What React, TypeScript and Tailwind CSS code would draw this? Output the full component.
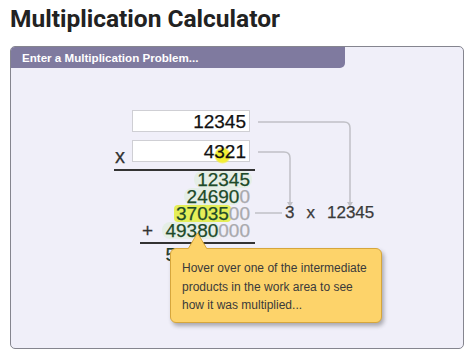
import React from "react";

function Pill({ children, hl }: { children: React.ReactNode; hl?: boolean }) {
  return (
    <span
      className={
        hl
          ? "inline-block h-[17px] rounded-[4px] bg-[#e4ee58] leading-[18px] text-[#1d4a29] shadow-[2px_0_0_0_#e4ee58,-2px_0_0_0_#e4ee58]"
          : "inline-block h-[17px] rounded-[8px] bg-[#e5eee6] leading-[18px] text-[#1d4a29] shadow-[2px_0_0_0_#e5eee6,-3px_0_0_0_#e5eee6]"
      }
    >
      {children}
    </span>
  );
}

export default function App() {
  return (
    <div className="h-[358px] w-[474px] overflow-hidden bg-white font-['Liberation_Sans',Arial,sans-serif]">
      <h1 className="h-[46px] pl-[10px] pt-[4px] font-['Roboto',sans-serif] text-[24.5px] font-bold leading-[30px] tracking-[0px] text-[#222]">
        Multiplication Calculator
      </h1>
      <div className="relative mx-[10px] h-[303px] rounded-[5px] border border-[#85858f] bg-[#f0eff9]">
        <div className="h-[21px] w-[334px] rounded-br-[5px] rounded-tl-[4px] bg-[#7f7a9f] pl-[11px] text-[11.6px] font-bold leading-[21px] text-white">
          Enter a Multiplication Problem...
        </div>

        <div className="ml-[103px] mt-[42px] w-[141px] text-[19px] leading-[17px] [-webkit-text-stroke:0.25px]">
          <div className="flex justify-end pr-[5px]">
            <div className="h-[22px] w-[118px] border border-[#cfcfd4] bg-white pr-[3px] text-right leading-[21px] text-[#111]">
              12345
            </div>
          </div>
          <div className="mt-[8px] flex items-end pr-[5px]">
            <span className="mb-[-4px] ml-[1px] text-[20px] leading-[20px] text-[#333]">x</span>
            <div className="isolate ml-auto h-[22px] w-[118px] border border-[#cfcfd4] bg-white pr-[3px] text-right leading-[21px] text-[#111]">
              4
              <span className="relative">
                <span className="absolute left-[0px] top-[6px] -z-10 h-[17px] w-[17px] rounded-full bg-[radial-gradient(circle,#f3ee35_0%,#f3ee35_55%,rgba(243,238,53,0)_72%)]" />
                3
              </span>
              21
            </div>
          </div>
          <div className="mt-[7px] h-[2px] bg-[#333]" />
          <div className="flex h-[17px] justify-end pr-[5px]">
            <Pill>12345</Pill>
          </div>
          <div className="flex h-[17px] justify-end pr-[5px]">
            <Pill>24690</Pill>
            <span className="leading-[18px] text-[#a9a9ad]">0</span>
          </div>
          <div className="flex h-[17px] justify-end pr-[5px]">
            <Pill hl>37035</Pill>
            <span className="leading-[18px] text-[#a9a9ad]">00</span>
          </div>
          <div className="flex h-[17px] items-center pr-[5px]">
            <span className="ml-[28px] leading-[18px] text-[#333]">+</span>
            <span className="ml-auto flex">
              <Pill>49380</Pill>
              <span className="leading-[18px] text-[#a9a9ad]">000</span>
            </span>
          </div>
          <div className="ml-[26px] mt-[3px] h-[2px] bg-[#333]" />
          <div className="flex h-[17px] justify-end pr-[5px] pt-[2px] text-[#1f3d2c]">53342745</div>
        </div>

        <svg className="pointer-events-none absolute left-0 top-0" width="454" height="303">
          <g fill="none" stroke="#c0c0c6" strokeWidth="1.5">
            <path d="M247 75 H333 Q339 75 339 81 V157" />
            <path d="M247 105 H273 Q279 105 279 111 V157" />
            <path d="M244 166 H271" />
          </g>
          <path d="M336 155 L339 160 L342 155 Z" fill="#c0c0c6" />
          <path d="M276 155 L279 160 L282 155 Z" fill="#c0c0c6" />
        </svg>

        <div className="absolute left-[274px] top-[156px] flex gap-[12px] text-[17px] leading-[20px] text-[#3a3a3a] [-webkit-text-stroke:0.25px]">
          <span>3</span>
          <span>x</span>
          <span>12345</span>
        </div>

        <div className="absolute left-[159px] top-[201px] h-[75px] w-[212px] rounded-[6px] border border-[#d6a63c] bg-[#fdd36a] pl-[11px] pt-[10px] text-[12px] leading-[18.5px] text-[#3a3a3a] shadow-[2px_3px_4px_rgba(0,0,0,0.3)]">
          Hover over one of the intermediate
          <br />
          products in the work area to see
          <br />
          how it was multiplied...
        </div>
        <svg className="absolute left-[175px] top-[185px]" width="24" height="18">
          <path d="M2 17 L11.5 1 L21 17" fill="#fdd36a" stroke="#d6a63c" strokeWidth="1" />
          <rect x="2.5" y="16.5" width="18" height="2" fill="#fdd36a" />
        </svg>
      </div>
    </div>
  );
}
